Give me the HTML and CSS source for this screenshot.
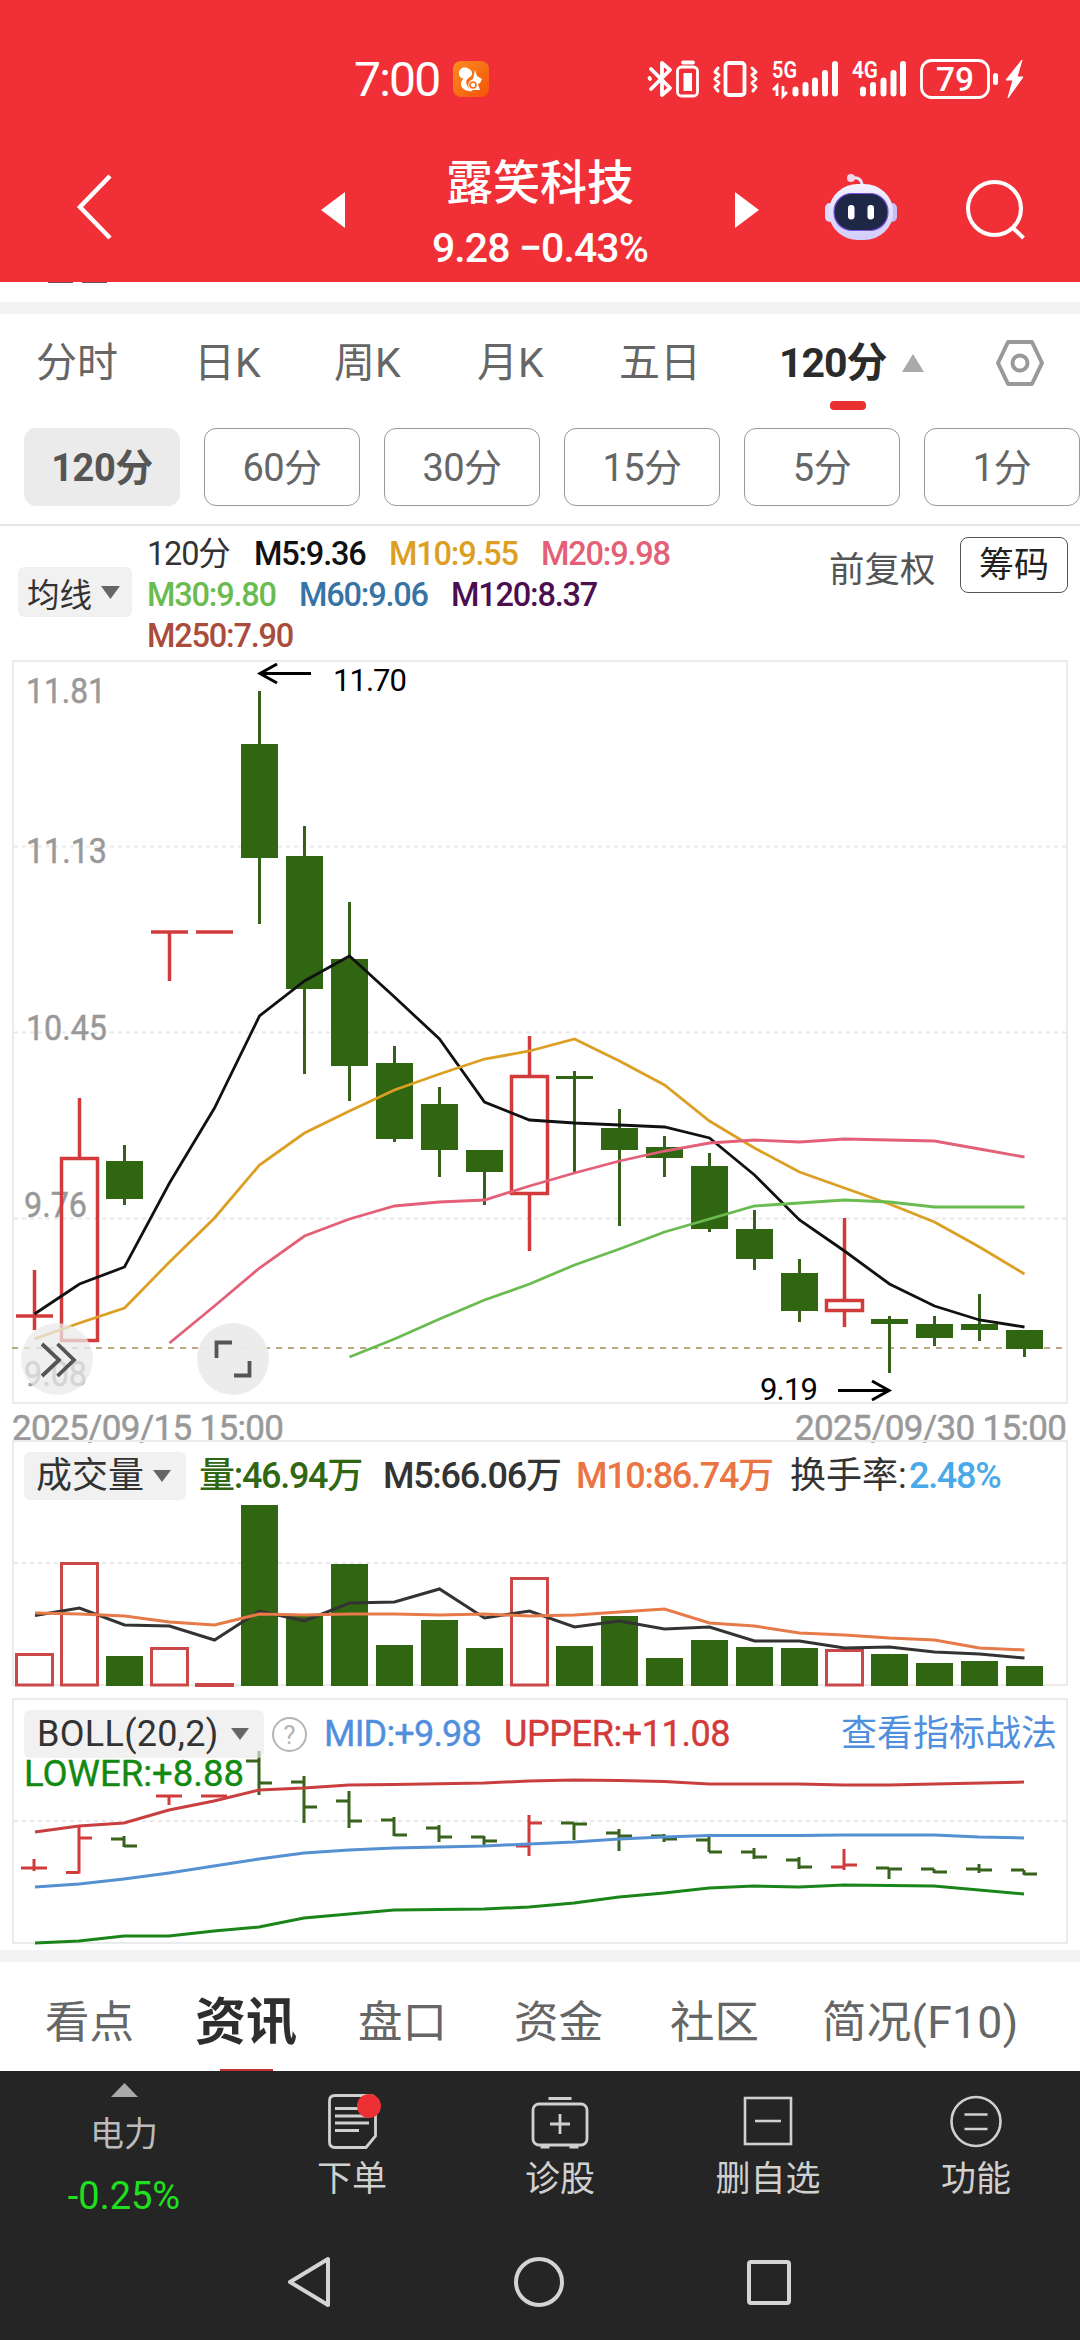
FILE: index.html
```html
<!DOCTYPE html>
<html lang="zh-CN">
<head>
<meta charset="utf-8">
<title>露笑科技</title>
<link rel="stylesheet" href="styles.css">
</head>
<body>
<header class="header">
  <div class="status">
    <span class="clock">7:00</span>
    <svg class="app" width="36" height="36" viewBox="0 0 36 36"><defs><linearGradient id="og" x1="0" y1="0" x2="1" y2="1"><stop offset="0" stop-color="#fb8c20"/><stop offset="1" stop-color="#f5520a"/></linearGradient></defs><rect width="36" height="36" rx="8" fill="url(#og)"/><path d="M6 12C6 7 12 5 16 8C20 10 20 14 17 16C14 18 12 20 14 24C15 27 17 29 20 30C14 31 8 28 8 23C8 20 10 19 10 17C7 17 6 15 6 12Z" fill="#fff"/><path d="M22 9L24 15L29 18L27 22L25 23L27 29H17C14 25 15 20 20 18Z" fill="#fff"/><circle cx="20" cy="24" r="3" fill="none" stroke="#f5701a" stroke-width="1.6"/></svg>
    <svg class="tray" width="400" height="44" viewBox="640 58 400 44">
      <g fill="none" stroke="#fff" stroke-width="3.800" stroke-linejoin="round" stroke-linecap="round">
        <path d="M651 69L670 88L662 95V63L670 70L651 89M649.500 78L650 79"/>
        <rect x="677.500" y="67" width="20" height="29" rx="4" stroke-width="2.800"/>
        <path d="M683 62.500H693"/>
        <rect x="725.500" y="63" width="19" height="32" rx="3"/>
        <path d="M718 68L715 72L719 75L715 79L719 83L715 87L718 91M752 68L756 72L752 75L756 79L752 83L756 87L753 91" stroke-width="3"/>
        <rect x="921.500" y="60.500" width="67" height="37" rx="10" stroke-width="2.800"/>
      </g>
      <rect x="683.500" y="73" width="8.500" height="18" fill="#fff"/>
      <path d="M795.500 89.500V93.500M805.500 85V93.500M815 80.500V93.500M825 73V93.500M835 64V93.500M863 89.500V93.500M873 85V93.500M883.500 80.500V93.500M893.500 73V93.500M903 64V93.500" stroke="#fff" stroke-width="6" stroke-linecap="round"/>
      <path d="M773 90L777 86V96M783 86V96L787 92" fill="none" stroke="#fff" stroke-width="2.800"/>
      <text class="net" x="772" y="78" textLength="25" lengthAdjust="spacingAndGlyphs">5G</text>
      <text class="net" x="852" y="78" textLength="26" lengthAdjust="spacingAndGlyphs">4G</text>
      <text class="pct" x="936" y="91" textLength="38" lengthAdjust="spacingAndGlyphs">79</text>
      <rect x="993" y="73" width="5" height="12" rx="2.500" fill="#fff"/>
      <path d="M1022 60L1006 80H1013L1008 98L1023 77H1017Z" fill="#fff" stroke="#fff" stroke-width="1" stroke-linejoin="round"/>
    </svg>
  </div>
  <div class="nav">
    <svg class="back" width="40" height="68" viewBox="0 0 40 68"><path d="M37 3L7 34L37 65" fill="none" stroke="#fff" stroke-width="4.500"/></svg>
    <svg class="prev" width="24" height="36" viewBox="0 0 24 36"><path d="M24 0V36L0 18Z" fill="#fff"/></svg>
    <div class="stock"><div class="name">露笑科技</div><div class="price">9.28 −0.43%</div></div>
    <svg class="next" width="24" height="36" viewBox="0 0 24 36"><path d="M0 0V36L24 18Z" fill="#fff"/></svg>
    <svg class="robot" width="72" height="68" viewBox="825 173 72 68"><defs><linearGradient id="hd" x1="0" y1="0" x2="0" y2="1"><stop offset="0" stop-color="#f4f2ff"/><stop offset="1" stop-color="#d2cdfa"/></linearGradient></defs><path d="M862 186C862 180 859 177 852 178" fill="none" stroke="#ece6fb" stroke-width="3"/><circle cx="851" cy="178" r="4" fill="#f0d6e8"/><rect x="825" y="203" width="10" height="19" rx="5" fill="#dcd9fb"/><rect x="887" y="203" width="10" height="19" rx="5" fill="#c4bff5"/><rect x="829" y="184" width="64" height="56" rx="29" ry="27" fill="url(#hd)"/><rect x="834" y="193.500" width="54" height="37" rx="18" fill="#1f2747" stroke="#7a55e0" stroke-width="1.200"/><rect x="848" y="205" width="6.500" height="14.500" rx="3.200" fill="#fff"/><rect x="867.500" y="205" width="6.500" height="14.500" rx="3.200" fill="#fff"/></svg>
    <svg class="search" width="62" height="62" viewBox="0 0 62 62" fill="none" stroke="#fff" stroke-width="4"><circle cx="29.500" cy="29.500" r="26.500"/><path d="M48 49L58.500 59"/></svg>
  </div>
</header>

<div class="peek"><i></i><i></i></div>
<div class="divider"></div>

<nav class="periods">
  <span class="p1">分时</span><span class="p2">日K</span><span class="p3">周K</span><span class="p4">月K</span><span class="p5">五日</span><span class="p6 on">120分</span>
  <svg class="up" width="22" height="18" viewBox="0 0 22 18"><path d="M11 0L22 18H0Z" fill="#aaa"/></svg>
  <svg class="gear" width="48" height="46" viewBox="0 0 48 46" fill="none" stroke="#999" stroke-width="4" stroke-linejoin="round"><path d="M12 2H36L46 23L36 44H12L2 23Z"/><circle cx="24" cy="23" r="7.500"/></svg>
</nav>
<div class="chips"><span class="on">120分</span><span>60分</span><span>30分</span><span>15分</span><span>5分</span><span>1分</span></div>

<section class="legend">
  <div class="drop ma">均线<svg width="19" height="13" viewBox="0 0 19 13"><path d="M0 0H19L9.500 13Z" fill="#666"/></svg></div>
  <div class="lines">
    <div><span class="w80">120分</span><span class="w108 k5">M5:9.36</span><span class="w125 k10">M10:9.55</span><span class="w125 k20">M20:9.98</span></div>
    <div><span class="w125 k30">M30:9.80</span><span class="w125 k60">M60:9.06</span><span class="w142 k120">M120:8.37</span></div>
    <div><span class="w142 k250">M250:7.90</span></div>
  </div>
  <span class="adjust">前复权</span>
  <span class="cost">筹码</span>
</section>

<svg class="kline" width="1080" height="780" viewBox="0 660 1080 780">
  <rect x="13" y="661" width="1054" height="742" fill="none" stroke="#ebebeb" stroke-width="2"/>
  <path d="M14 846.500H1066M14 1032.500H1066M14 1218.500H1066" stroke="#e9e9e9" stroke-width="2" stroke-dasharray="4 4"/>
  <path d="M12 1348H1066" stroke="#b8aa7c" stroke-width="2" stroke-dasharray="6 6"/>
  <g class="axis">
    <text x="26" y="703" textLength="80" lengthAdjust="spacingAndGlyphs">11.81</text><text x="26" y="863" textLength="81" lengthAdjust="spacingAndGlyphs">11.13</text><text x="26" y="1040" textLength="81" lengthAdjust="spacingAndGlyphs">10.45</text><text x="24" y="1217" textLength="63" lengthAdjust="spacingAndGlyphs">9.76</text><text x="24" y="1386" textLength="63" lengthAdjust="spacingAndGlyphs">9.08</text>
    <text x="12" y="1440" textLength="272">2025/09/15 15:00</text><text x="795" y="1440" textLength="272">2025/09/30 15:00</text>
  </g>
  <path d="M34.500 1270V1330M16 1316H53M79.500 1098V1157M169.500 932V981M151 932H188M196 932H233M529.500 1036V1075M529.500 1195V1251M844.500 1218V1300M844.500 1312V1327" stroke="#d23b3b" stroke-width="3.500" fill="none"/>
  <path d="M61.500 1158.500H97.500V1340.500H61.500ZM511.500 1076.500H547.500V1193.500H511.500ZM826.500 1300.500H862.500V1310.500H826.500Z" fill="none" stroke="#d23b3b" stroke-width="3.500"/>
  <path d="M124.500 1145V1205M259.500 691V924M304.500 826V1074M349.500 902V1101M394.500 1046V1142M439.500 1087V1177M484.500 1150V1205M574.500 1071V1172M619.500 1109V1226M664.500 1136V1177M709.500 1153V1232M754.500 1210V1270M799.500 1259V1322M889.500 1316V1373M934.500 1316V1346M979.500 1294V1341M1024.500 1330V1357" stroke="#36611c" stroke-width="3"/>
  <path d="M106 1161h37v38h-37zM241 744h37v114h-37zM286 856h37v133h-37zM331 959h37v107h-37zM376 1063h37v76h-37zM421 1104h37v46h-37zM466 1150h37v22h-37zM556 1076h37v3h-37zM601 1128h37v22h-37zM646 1147h37v11h-37zM691 1166h37v63h-37zM736 1229h37v30h-37zM781 1273h37v38h-37zM871 1319h37v5h-37zM916 1324h37v14h-37zM961 1324h37v6h-37zM1006 1330h37v19h-37z" fill="#306612"/>
  <g fill="none" stroke-width="2.800">
    <polyline stroke="#111" points="34.500,1314 79.500,1284 124.500,1267 169.500,1183 214.500,1108 259.500,1016 304.500,981 349.500,956 394.500,997 439.500,1039 484.500,1102 529.500,1120 574.500,1123 619.500,1125 664.500,1127 709.500,1138 754.500,1175 799.500,1220 844.500,1251 889.500,1284 934.500,1306 979.500,1320 1024.500,1327"/>
    <polyline stroke="#dc9f23" points="34.500,1339 79.500,1323 124.500,1308 169.500,1262 214.500,1218 259.500,1165 304.500,1133 349.500,1111 394.500,1090 439.500,1074 484.500,1059 529.500,1051 574.500,1039 619.500,1061 664.500,1085 709.500,1121 754.500,1148 799.500,1172 844.500,1188 889.500,1204 934.500,1222 979.500,1247 1024.500,1274"/>
    <polyline stroke="#e45f78" points="169.500,1343 214.500,1306 259.500,1268 304.500,1236 349.500,1219 394.500,1206 439.500,1202 484.500,1200 529.500,1186 574.500,1173 619.500,1161 664.500,1151 709.500,1143 754.500,1140 799.500,1142 844.500,1139 889.500,1140 934.500,1141 979.500,1149 1024.500,1157"/>
    <polyline stroke="#6abb50" points="349.500,1357 394.500,1339 439.500,1319 484.500,1300 529.500,1284 574.500,1265 619.500,1249 664.500,1232 709.500,1219 754.500,1206 799.500,1203 844.500,1200 889.500,1202 934.500,1207 1024.500,1207"/>
  </g>
  <path d="M311 673.500H261M277 664L260 673.500L277 683M838 1390.500H888M872 1381L889 1390.500L872 1400" fill="none" stroke="#000" stroke-width="3"/>
  <text class="mark" x="333" y="691" textLength="74">11.70</text><text class="mark" x="760" y="1400" textLength="58">9.19</text>
  <circle cx="57" cy="1359" r="36" fill="#e9e9e9" fill-opacity=".75"/><circle cx="233" cy="1359" r="36" fill="#ebebeb" fill-opacity=".95"/>
  <path d="M42 1344L59 1360L42 1376M57.500 1344L74 1360L57.500 1376M232 1342.500H216.500V1358M249.500 1361V1375.500H234" fill="none" stroke="#555" stroke-width="3.800"/>
</svg>

<section class="panel volume">
  <svg class="plot" width="1080" height="258" viewBox="0 1440 1080 258">
    <rect x="13" y="1441" width="1054" height="244" fill="none" stroke="#ebebeb" stroke-width="2"/>
    <path d="M14 1563H1066" stroke="#e9e9e9" stroke-width="2" stroke-dasharray="4 4"/>
    <path d="M16.500 1654.500h36v30.500h-36zM61.500 1563.500h36v121.500h-36zM151.500 1648.500h36v36.500h-36zM196.500 1684.500h36v1h-36zM511.500 1578.500h36v106.500h-36zM826.500 1650.500h36v34.500h-36z" fill="#fff" stroke="#cb4848" stroke-width="3"/>
    <path d="M106 1656h37v30h-37zM241 1505h37v181h-37zM286 1615h37v71h-37zM331 1564h37v122h-37zM376 1645h37v41h-37zM421 1620h37v66h-37zM466 1648h37v38h-37zM556 1646h37v40h-37zM601 1616h37v70h-37zM646 1658h37v28h-37zM691 1640h37v46h-37zM736 1647h37v39h-37zM781 1648h37v38h-37zM871 1654h37v32h-37zM916 1663h37v23h-37zM961 1661h37v25h-37zM1006 1666h37v20h-37z" fill="#306612"/>
    <g fill="none" stroke-width="3">
      <polyline stroke="#333" points="35,1615.500 79.500,1608 124.500,1625 169.500,1626 214.500,1640 259.500,1611 304.500,1621 349.500,1603 394.500,1602 439.500,1589 484.500,1618 529.500,1611 574.500,1627 619.500,1621 664.500,1629 709.500,1627 754.500,1641 799.500,1641 844.500,1648 889.500,1647 934.500,1652 979.500,1654 1024.500,1658"/>
      <polyline stroke="#e67a48" points="35,1613 79.500,1614 124.500,1616 169.500,1622 214.500,1625 259.500,1614 304.500,1615 349.500,1614 394.500,1614 439.500,1615 484.500,1614 529.500,1616 574.500,1615 619.500,1612 664.500,1609 709.500,1623 754.500,1626 799.500,1633 844.500,1635 889.500,1638 934.500,1640 979.500,1648 1024.500,1650"/>
    </g>
  </svg>
  <div class="row"><div class="drop v">成交量<svg width="18" height="12" viewBox="0 0 18 12"><path d="M0 0H18L9 12Z" fill="#666"/></svg></div><span class="v1">量:46.94万</span><span class="v2">M5:66.06万</span><span class="v3">M10:86.74万</span><span class="v4">换手率:</span><span class="v5">2.48%</span></div>
</section>

<section class="panel boll">
  <svg class="plot" width="1080" height="252" viewBox="0 1698 1080 252">
    <rect x="13" y="1699" width="1054" height="244" fill="none" stroke="#ebebeb" stroke-width="2"/>
    <path d="M14 1821H1066" stroke="#e9e9e9" stroke-width="2" stroke-dasharray="4 4"/>
    <g fill="none" stroke-width="3">
      <path stroke="#d23b3b" d="M34 1859V1871M21 1868H47M79 1826V1873.500M66 1872.500H79M79 1838H92M169 1796V1805M156 1796H182M201 1796H227M529 1815V1856M516 1846H529M529 1823H542M844 1849V1870M831 1867H844M844 1865H857"/>
      <path stroke="#37631d" d="M124 1836V1847M111 1839H124M124 1846H137M259 1751V1795M246 1761H259M259 1783H272M304 1776V1823M291 1782H304M304 1807H317M349 1791V1828M336 1801H349M349 1821H362M394 1817V1836M381 1820H394M394 1835H407M439 1825V1842M426 1828H439M439 1837H452M484 1836V1845M471 1837H484M484 1841H497M574 1823V1840M561 1823H574M574 1824H587M619 1829V1851M606 1833H619M619 1836H632M664 1834V1842M651 1836H664M664 1839H677M709 1837V1852M696 1840H709M709 1852H722M754 1848V1859M741 1852H754M754 1857H767M799 1857V1869M786 1860H799M799 1867H812M889 1868V1879M876 1868H889M889 1869H902M934 1869V1873M921 1869H934M934 1872H947M979 1864V1873M966 1869H979M979 1870H992M1024 1870V1875M1011 1870H1024M1024 1874H1037"/>
      <polyline stroke="#c93f3f" points="35,1832 79,1826 124,1823 169,1810 214,1801 259,1790 304,1788 349,1785 394,1784.500 484,1783 529,1781 574,1780 619,1780.500 664,1781.500 709,1784 799,1784 844,1785 889,1785 934,1784 1024,1782"/>
      <polyline stroke="#5590d2" points="35,1887 79,1884 124,1879 169,1873 214,1866 259,1859 304,1853 349,1850 394,1848 484,1846 529,1844 574,1842 619,1839 664,1837 709,1835.500 799,1835.500 844,1835 934,1835 979,1837 1024,1838"/>
      <polyline stroke="#1b851b" points="35,1943 79,1941 124,1936 169,1936 214,1931 259,1927 304,1918 349,1914 394,1910 484,1909 529,1907 574,1903 619,1897 664,1893 709,1888 754,1886 799,1887 844,1885 889,1885.500 934,1886 979,1890 1024,1894"/>
    </g>
  </svg>
  <div class="row"><div class="drop b"><span>BOLL(20,2)</span><svg width="18" height="12" viewBox="0 0 18 12"><path d="M0 0H18L9 12Z" fill="#666"/></svg></div><span class="help">?</span><span class="b1">MID:+9.98</span><span class="b2">UPPER:+11.08</span><span class="b3">查看指标战法</span></div>
  <div class="lower">LOWER:+8.88</div>
</section>
<div class="divider"></div>

<nav class="infotabs"><span>看点</span><span class="on">资讯</span><span class="t3">盘口</span><span class="t4">资金</span><span class="t5">社区</span><span class="t6">简况(F10)</span></nav>

<footer class="bottom">
  <div class="actions">
    <div class="sector"><svg width="27" height="14" viewBox="0 0 27 14"><path d="M13.500 0L27 14H0Z" fill="#aaa"/></svg><span>电力</span><b>-0.25%</b></div>
    <div class="act"><svg width="60" height="60" viewBox="322 2092 60 60" fill="none" stroke="#d0d0d0" stroke-width="2.800"><path d="M335 2095.500H370Q375.500 2095.500 375.500 2101V2136L366 2147.500H335Q329.500 2147.500 329.500 2142V2101Q329.500 2095.500 335 2095.500Z"/><path d="M335 2108.500H360M335 2116H369M335 2123H369M335 2130.500H359"/><circle cx="369" cy="2106" r="12" fill="#ec3033" stroke="none"/></svg><span>下单</span></div>
    <div class="act"><svg width="60" height="60" viewBox="529.500 2092 60 60" fill="none" stroke="#d0d0d0" stroke-width="2.800"><rect x="532.500" y="2104" width="54" height="41" rx="6"/><path d="M548 2098.500H571M540 2147H549M569 2147H578M559.500 2114V2134M549.500 2124H569.500"/></svg><span>诊股</span></div>
    <div class="act"><svg width="60" height="60" viewBox="737 2092 60 60" fill="none" stroke="#d0d0d0" stroke-width="2.600"><rect x="744" y="2098" width="46" height="46"/><path d="M754 2121H780"/></svg><span>删自选</span></div>
    <div class="act"><svg width="60" height="60" viewBox="945.500 2092 60 60" fill="none" stroke="#d0d0d0" stroke-width="2.600"><circle cx="975.500" cy="2121.500" r="24.500"/><path d="M964 2114.500H987M964 2129H987"/></svg><span>功能</span></div>
  </div>
  <div class="sysnav">
    <svg width="46" height="54" viewBox="286 2255 46 54" fill="none" stroke="#d4d4d4" stroke-width="4" stroke-linejoin="round"><path d="M328 2259V2305L290 2282Z"/></svg>
    <svg width="50" height="54" viewBox="515 2255 50 54" fill="none" stroke="#d4d4d4" stroke-width="4"><circle cx="540" cy="2282" r="23"/></svg>
    <svg width="46" height="54" viewBox="746 2255 46 54" fill="none" stroke="#d4d4d4" stroke-width="4"><rect x="749" y="2262" width="40" height="41" rx="2"/></svg>
  </div>
</footer>
</body>
</html>
```
FILE: styles.css
```css
* { box-sizing: border-box; }
body { margin: 0; width: 1080px; height: 2340px; overflow: hidden; background: #fff; color: #333; font-family: Roboto, "Noto Sans CJK SC", sans-serif; }
svg { display: block; flex: none; }
span { white-space: nowrap; flex: none; }

.header { height: 282px; background: #f12f36; color: #fff; }
.status { display: flex; height: 130px; padding-top: 58px; align-items: flex-start; }
.clock { width: 98px; margin-left: 354px; font-size: 48px; line-height: 44px; letter-spacing: -1.8px; }
.app { margin-top: 3px; margin-left: 1px; }
.tray { margin-left: 151px; }
.net { fill: #fff; font-size: 23px; font-weight: 600; }
.pct { fill: #fff; font-size: 34px; font-weight: 500; }
.nav { display: flex; align-items: flex-start; height: 152px; }
.back { margin: 43px 0 0 73px; }
.prev { margin: 62px 0 0 208px; }
.stock { width: 390px; text-align: center; }
.name { margin-top: 23px; font-size: 47px; line-height: 60px; font-weight: 500; }
.price { font-size: 41px; line-height: 71px; font-weight: 500; letter-spacing: -.9px; }
.next { margin-top: 62px; }
.robot { margin: 43px 0 0 66px; }
.search { margin: 49px 0 0 68px; }

.peek { display: flex; gap: 9px; height: 20px; padding-left: 48px; }
.peek i { width: 25px; height: 1px; background: #7a4a52; }
.divider { height: 12px; background: #f4f4f4; }

.periods { display: flex; align-items: center; height: 114px; padding-bottom: 16px; padding-left: 36px; font-size: 41px; line-height: 60px; color: #666; }
.p1 { width: 158px; }
.p2 { width: 140px; }
.p3 { width: 143px; }
.p4 { width: 142px; }
.p5 { width: 160px; }
.p6 { width: 123px; position: relative; letter-spacing: -1px; }
.p6.on { font-weight: 700; color: #2b2b2b; }
.p6::after { content: ""; position: absolute; left: 51px; top: 68px; width: 36px; height: 9px; border-radius: 4px; background: #e93030; }
.up { margin-top: -1px; }
.gear { margin-left: 72px; }

.chips { display: flex; gap: 24px; height: 98px; padding-left: 24px; border-bottom: 2px solid #e6e6e6; }
.chips span { width: 156px; height: 78px; border: 1.5px solid #999; border-radius: 12px; text-align: center; font-size: 38px; line-height: 78px; letter-spacing: -.5px; color: #666; }
.chips .on { border-color: #ebebeb; background: #ebebeb; font-weight: 700; color: #555; }

.legend { display: flex; align-items: flex-start; height: 134px; padding-left: 18px; }
.drop { display: flex; align-items: center; border-radius: 6px; background: rgba(235, 235, 235, .68); color: #333; }
.ma { width: 114px; height: 50px; margin-top: 41px; padding-left: 9px; gap: 9px; font-size: 32.5px; }
.lines { width: 681px; margin: 8px 0 0 15px; font-size: 32.5px; line-height: 41px; letter-spacing: -1.2px; }
.lines div { display: flex; gap: 27px; padding-left: 0; }
.w80 { width: 80px; }
.w108 { width: 108px; }
.w125 { width: 125px; }
.w142 { width: 142px; }
.k5 { color: #111; }
.k10 { color: #dc9f23; }
.k20 { color: #e45f78; }
.k30 { color: #6abb50; }
.k60 { color: #3873a5; }
.k120 { color: #4b0f50; }
.k250 { color: #aa4c3b; }
.lines span:not(.w80) { font-weight: 500; }
.adjust { width: 131px; margin: 19px 0 0 1px; font-size: 35.5px; line-height: 50px; color: #555; }
.cost { width: 108px; height: 56px; margin-top: 11px; border: 1.5px solid #555; border-radius: 8px; text-align: center; font-size: 35px; line-height: 55px; color: #222; }

.kline, .plot { overflow: visible; }
.axis text { font-size: 35px; fill: #999; stroke: #999; stroke-width: .5px; }
.mark { font-size: 31px; fill: #000; }

.panel { position: relative; padding-left: 24px; }
.plot { position: absolute; left: 0; top: 0; }
.row { position: relative; display: flex; align-items: center; height: 48px; font-size: 36px; line-height: 50px; }
.volume { height: 258px; padding-top: 12px; }
.v { width: 162px; height: 48px; padding-left: 12px; gap: 9px; }
.v1 { width: 184px; margin-left: 13px; color: #306712; }
.v2 { width: 193px; }
.v3 { width: 214px; color: #eb7443; }
.v4 { width: 119px; }
.v5 { color: #4aa9e9; }
.v1, .v2, .v3, .v5 { letter-spacing: -1.3px; font-weight: 500; }
.boll { height: 252px; padding-top: 12px; }
.b { width: 240px; height: 48px; padding-left: 13px; }
.b span { width: 194px; letter-spacing: .3px; }
.help { width: 35px; height: 35px; margin-left: 8px; border: 2px solid #b5b5b5; border-radius: 50%; text-align: center; font-size: 26px; line-height: 32px; color: #b5b5b5; }
.b1 { width: 180px; margin-left: 17px; letter-spacing: -.8px; color: #508fdd; }
.b2 { width: 337px; letter-spacing: -.4px; color: #d33a3a; }
.b1, .b2, .lower { -webkit-text-stroke: .4px currentColor; }
.b3 { color: #508fdd; }
.lower { position: relative; width: 230px; margin-top: -7px; padding-left: 0; font-size: 36.5px; line-height: 46px; color: #128a12; }

.infotabs { display: flex; height: 109px; padding-left: 45px; font-size: 44.5px; line-height: 122px; color: #666; }
.infotabs span { width: 150px; }
.infotabs .on { position: relative; width: 163px; font-size: 51px; font-weight: 700; color: #2e2e2e; }
.infotabs .on::after { content: ""; position: absolute; left: 25px; top: 107px; width: 53px; height: 2px; background: #b33; }
.infotabs .t3, .infotabs .t4 { width: 156px; }
.infotabs .t5 { width: 152px; }
.infotabs .t6 { letter-spacing: .3px; }

.bottom { height: 269px; background: #252525; color: #d0d0d0; font-size: 35px; }
.actions { display: flex; height: 160px; }
.actions > div { display: flex; flex-direction: column; align-items: center; }
.sector { width: 248px; padding-top: 12px; }
.sector span { margin-top: 12px; font-size: 34px; line-height: 50px; color: #bbb; }
.sector b { margin-top: 17px; font-size: 38px; line-height: 40px; font-weight: 400; color: #1fe01f; }
.act { width: 208px; padding-top: 21px; }
.act span { margin-top: 3px; line-height: 50px; }
.sysnav { display: flex; padding: 24px 288px 0 286px; justify-content: space-between; }
```
